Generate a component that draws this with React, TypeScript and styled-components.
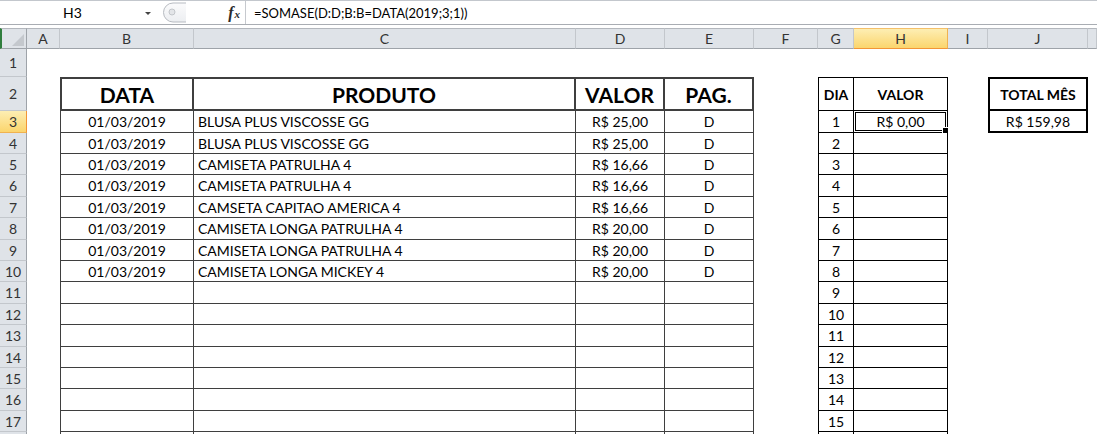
import React from "react";
import styled, { createGlobalStyle } from "styled-components";

const GlobalStyle = createGlobalStyle`
  html, body { margin: 0; padding: 0; background: #fff; }
  body {
    width: 1097px;
    height: 434px;
    overflow: hidden;
    font-family: Lato, "Open Sans", "Liberation Sans", sans-serif;
  }
`;

const LETTERS = ["A", "B", "C", "D", "E", "F", "G", "H", "I", "J", "K"];
const ROW_HEIGHTS = [28, 34, 22, 21, 21, 22, 21, 22, 21, 21, 22, 21, 22, 21, 21, 22, 21, 22];
const LAST_ROW = 18;

const PRODUCTS: string[][] = [
  ["01/03/2019", "BLUSA PLUS VISCOSSE GG", "R$ 25,00", "D"],
  ["01/03/2019", "BLUSA PLUS VISCOSSE GG", "R$ 25,00", "D"],
  ["01/03/2019", "CAMISETA PATRULHA 4", "R$ 16,66", "D"],
  ["01/03/2019", "CAMISETA PATRULHA 4", "R$ 16,66", "D"],
  ["01/03/2019", "CAMSETA CAPITAO AMERICA 4", "R$ 16,66", "D"],
  ["01/03/2019", "CAMISETA LONGA PATRULHA 4", "R$ 20,00", "D"],
  ["01/03/2019", "CAMISETA LONGA PATRULHA 4", "R$ 20,00", "D"],
  ["01/03/2019", "CAMISETA LONGA MICKEY 4", "R$ 20,00", "D"],
];

const LINE = "1px solid #3f3f3f";
const LINE2 = "2px solid #3f3f3f";
const BLK = "1px solid #000";
const BLK2 = "2px solid #000";

type Spec = {
  t?: string;
  r?: string;
  b?: string;
  l?: string;
  text?: string;
  bold?: boolean;
  size?: number;
  left?: boolean;
  selected?: boolean;
};

function cellSpec(row: number, col: number): Spec {
  const s: Spec = {};
  // main table B..E
  if (col >= 1 && col <= 4 && row >= 2) {
    if (row === 2) {
      s.t = LINE2;
      s.b = LINE2;
      s.r = LINE2;
      if (col === 1) s.l = LINE2;
      s.bold = true;
      s.size = 21;
      s.text = ["DATA", "PRODUTO", "VALOR", "PAG."][col - 1];
    } else {
      s.r = LINE;
      s.b = LINE;
      if (col === 1) s.l = LINE;
      const p = PRODUCTS[row - 3];
      if (p) s.text = p[col - 1];
      if (col === 2) s.left = true;
    }
  }
  // day table G..H
  if ((col === 6 || col === 7) && row >= 2) {
    s.r = BLK;
    s.b = BLK;
    if (col === 6) s.l = BLK;
    if (row === 2) {
      s.t = BLK;
      s.bold = true;
      s.text = col === 6 ? "DIA" : "VALOR";
    } else if (col === 6) {
      if (row < LAST_ROW) s.text = String(row - 2);
    } else if (row === 3) {
      s.text = "R$ 0,00";
      s.selected = true;
    }
  }
  // total box J
  if (col === 9 && (row === 2 || row === 3)) {
    s.l = BLK2;
    s.r = BLK2;
    s.b = BLK2;
    if (row === 2) s.t = BLK2;
    s.bold = row === 2;
    s.text = row === 2 ? "TOTAL MÊS" : "R$ 159,98";
  }
  return s;
}

/* ---------- formula bar ---------- */

const Page = styled.div`
  width: 1097px;
  height: 434px;
  overflow: hidden;
  background: #fff;
`;

const FormulaBar = styled.div`
  display: flex;
  align-items: stretch;
  height: 25px;
  box-sizing: border-box;
  border-top: 1px solid #c3c7cd;
  border-bottom: 1px solid #a9adb3;
  margin-bottom: 3px;
  background: #fff;
  font-size: 14px;
  color: #000;
`;

const NameBox = styled.div`
  width: 160px;
  display: flex;
  align-items: center;
`;

const NameText = styled.span`
  width: 145px;
  text-align: center;
`;

const DropArrow = styled.span`
  width: 0;
  height: 0;
  border-left: 3px solid transparent;
  border-right: 3px solid transparent;
  border-top: 3px solid #444;
  margin-top: 2px;
`;

const Splitter = styled.svg`
  display: block;
  width: 24px;
  height: 23px;
  margin-left: 2px;
`;

const FxZone = styled.div`
  width: 60px;
  display: flex;
  align-items: center;
  justify-content: flex-end;
  padding-right: 5px;
  box-sizing: border-box;
  border-right: 1px solid #c6c9ce;
`;

const FxF = styled.span`
  font-family: "Liberation Serif", "DejaVu Serif", serif;
  font-style: italic;
  font-weight: 700;
  font-size: 16px;
  color: #2b2b2b;
`;

const FxX = styled.span`
  font-family: "Liberation Serif", "DejaVu Serif", serif;
  font-style: italic;
  font-weight: 700;
  font-size: 11px;
  color: #2b2b2b;
  margin-left: 1px;
  margin-top: 3px;
`;

const FormulaText = styled.div`
  flex: 1;
  display: flex;
  align-items: center;
  padding-left: 8px;
  font-size: 13px;
`;

/* ---------- sheet ---------- */

const Sheet = styled.div`
  display: grid;
  grid-template-columns: 27px 33px 134px 382px 89px 89px 64px 36px 94px 40px 100px 1fr;
  grid-template-rows: 21px ${ROW_HEIGHTS.map((h) => `${h}px`).join(" ")};
`;

const Corner = styled.div`
  box-sizing: border-box;
  background: #dfe3e8;
  border-left: 2px solid #2f7d3d;
  border-top: 1px solid #b3b7bd;
  border-right: 1px solid #9ea3a9;
  border-bottom: 1px solid #9ea3a9;
  display: flex;
  align-items: flex-end;
  justify-content: flex-end;
  padding: 0 2px 2px 0;
`;

const CornerMark = styled.svg`
  display: block;
  width: 12px;
  height: 12px;
`;

const ColHead = styled.div<{ $active?: boolean }>`
  box-sizing: border-box;
  display: flex;
  align-items: center;
  justify-content: center;
  font-size: 14px;
  color: #333;
  background: ${(p) => (p.$active ? "linear-gradient(#fdeeb3, #fbd56d)" : "#dfe3e8")};
  border-top: 1px solid ${(p) => (p.$active ? "#f4c06a" : "#b3b7bd")};
  border-right: 1px solid ${(p) => (p.$active ? "#f0b250" : "#c3c7cc")};
  border-bottom: 1px solid ${(p) => (p.$active ? "#f29536" : "#9ea3a9")};
`;

const RowHead = styled.div<{ $active?: boolean }>`
  box-sizing: border-box;
  display: flex;
  align-items: center;
  justify-content: center;
  font-size: 14px;
  color: #333;
  background: ${(p) => (p.$active ? "linear-gradient(#fdeeb3, #fbd56d)" : "#dfe3e8")};
  border-right: 1px solid ${(p) => (p.$active ? "#f29536" : "#9ea3a9")};
  border-bottom: 1px solid ${(p) => (p.$active ? "#f0b250" : "#c3c7cc")};
`;

const Cell = styled.div<{
  $t?: string;
  $r?: string;
  $b?: string;
  $l?: string;
  $bold?: boolean;
  $size?: number;
  $left?: boolean;
}>`
  position: relative;
  box-sizing: border-box;
  display: flex;
  align-items: center;
  justify-content: ${(p) => (p.$left ? "flex-start" : "center")};
  padding-left: ${(p) => (p.$left ? "4px" : "0")};
  font-size: ${(p) => p.$size ?? 14}px;
  font-weight: ${(p) => (p.$bold ? 700 : 400)};
  color: #000;
  white-space: nowrap;
  border-top: ${(p) => p.$t ?? "none"};
  border-right: ${(p) => p.$r ?? "none"};
  border-bottom: ${(p) => p.$b ?? "none"};
  border-left: ${(p) => p.$l ?? "none"};
`;

const SelectionFrame = styled.div`
  position: absolute;
  top: -1px;
  left: -1px;
  right: -1px;
  bottom: -1px;
  border: 3px double #000;
  pointer-events: none;
`;

const FillHandle = styled.div`
  position: absolute;
  right: -4px;
  bottom: -4px;
  width: 5px;
  height: 5px;
  background: #000;
  border: 1px solid #fff;
`;

export default function App() {
  const cells: React.ReactNode[] = [];

  cells.push(
    <Corner key="corner">
      <CornerMark viewBox="0 0 12 12">
        <polygon points="12,0 12,12 0,12" fill="#c4c8cd" />
      </CornerMark>
    </Corner>
  );
  LETTERS.forEach((L) => {
    cells.push(
      <ColHead key={`h-${L}`} $active={L === "H"}>
        {L === "K" ? "" : L}
      </ColHead>
    );
  });

  ROW_HEIGHTS.forEach((_, i) => {
    const row = i + 1;
    cells.push(
      <RowHead key={`r-${row}`} $active={row === 3}>
        {row < LAST_ROW ? row : ""}
      </RowHead>
    );
    LETTERS.forEach((L, col) => {
      const s = cellSpec(row, col);
      cells.push(
        <Cell
          key={`${L}${row}`}
          $t={s.t}
          $r={s.r}
          $b={s.b}
          $l={s.l}
          $bold={s.bold}
          $size={s.size}
          $left={s.left}
        >
          {s.text}
          {s.selected && (
            <SelectionFrame>
              <FillHandle />
            </SelectionFrame>
          )}
        </Cell>
      );
    });
  });

  return (
    <Page>
      <GlobalStyle />
      <FormulaBar>
        <NameBox>
          <NameText>H3</NameText>
          <DropArrow />
        </NameBox>
        <Splitter viewBox="0 0 24 23">
          <defs>
            <linearGradient id="pill" x1="0" y1="0" x2="0" y2="1">
              <stop offset="0" stopColor="#fbfbfc" />
              <stop offset="1" stopColor="#eceef1" />
            </linearGradient>
          </defs>
          <path d="M24 2 H11 A9.5 9.5 0 0 0 11 21 H24" fill="url(#pill)" stroke="#b7bbc1" strokeWidth="1" />
          <circle cx="10" cy="11" r="3" fill="#e3e5e8" stroke="#c3c6ca" strokeWidth="1" />
        </Splitter>
        <FxZone>
          <FxF>f</FxF>
          <FxX>x</FxX>
        </FxZone>
        <FormulaText>=SOMASE(D:D;B:B=DATA(2019;3;1))</FormulaText>
      </FormulaBar>
      <Sheet>{cells}</Sheet>
    </Page>
  );
}
